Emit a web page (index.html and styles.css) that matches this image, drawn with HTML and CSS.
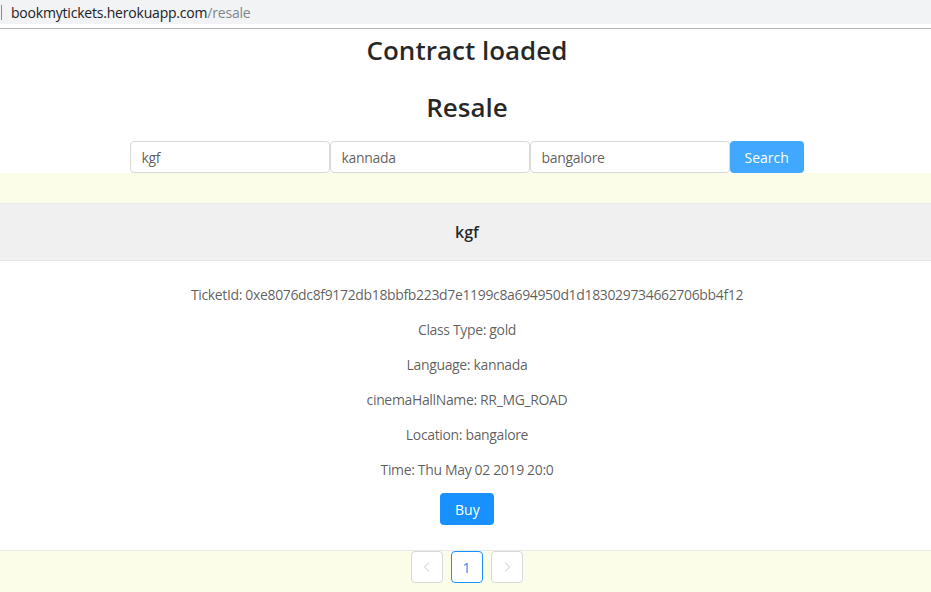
FILE: index.html
```html
<!DOCTYPE html>
<html>
<head>
<meta charset="utf-8">
<link rel="stylesheet" href="styles.css">
</head>
<body>
<div class="urlbar"><span class="caret"></span><span class="host">bookmytickets.herokuapp.com</span><span class="path">/resale</span></div>
<div class="urlgap"></div>
<main class="page">
  <h2 class="title">Contract loaded</h2>
  <h2 class="title second">Resale</h2>
  <form class="search">
    <input class="field" value="kgf">
    <input class="field" value="kannada">
    <input class="field" value="bangalore">
    <button type="button" class="btn search-btn">Search</button>
  </form>
  <div class="band"></div>
  <section class="card">
    <div class="card-head">kgf</div>
    <div class="card-body">
      <p>TicketId: 0xe8076dc8f9172db18bbfb223d7e1199c8a694950d1d183029734662706bb4f12</p>
      <p>Class Type: gold</p>
      <p>Language: kannada</p>
      <p>cinemaHallName: RR_MG_ROAD</p>
      <p>Location: bangalore</p>
      <p>Time: Thu May 02 2019 20:0</p>
      <button type="button" class="btn buy-btn">Buy</button>
    </div>
  </section>
  <nav class="pager">
    <span class="pg disabled"><svg width="12" height="12" viewBox="0 0 12 12"><path d="M8 1.5 L3.5 6 L8 10.5" fill="none" stroke="currentColor" stroke-width="1"/></svg></span>
    <span class="pg active">1</span>
    <span class="pg disabled"><svg width="12" height="12" viewBox="0 0 12 12"><path d="M4 1.5 L8.5 6 L4 10.5" fill="none" stroke="currentColor" stroke-width="1"/></svg></span>
  </nav>
</main>
</body>
</html>
```
FILE: styles.css
```css
* { box-sizing: border-box; }
html, body { margin: 0; padding: 0; background: #fff; }
body {
  font-family: "Open Sans", "Noto Sans", sans-serif;
  font-size: 14px;
  color: rgba(0,0,0,.65);
  overflow: hidden;
  height: 592px;
}
.urlbar {
  height: 24px;
  background: #f1f3f4;
  display: flex;
  align-items: center;
  padding-left: 1px;
  font-size: 14px;
  letter-spacing: -0.2px;
}
.caret { width: 1px; height: 15px; background: #8a8a8a; margin-right: 9px; }
.host { color: #202124; }
.path { color: #80868b; }
.urlgap { height: 5px; border-bottom: 1px solid #b3b3b3; }
.page { display: flex; flex-direction: column; align-items: center; }
.title {
  margin: 0;
  font-size: 26px;
  font-weight: 600;
  color: rgba(0,0,0,.85);
  line-height: 40px;
  height: 44px;
  padding-top: 1px;
  padding-left: 3px;
}
.second { margin-top: 13px; height: 55px; }
.search { display: flex; margin: 0 0 0 2px; }
.field {
  width: 200px;
  height: 32px;
  border: 1px solid #d9d9d9;
  border-radius: 4px;
  padding: 4px 11px;
  font: inherit;
  font-size: 14px;
  color: rgba(0,0,0,.65);
  outline: none;
  letter-spacing: -0.3px;
}
.btn {
  height: 32px;
  border: none;
  border-radius: 4px;
  color: #fff;
  font: inherit;
  font-size: 14px;
  padding: 0 15px;
  cursor: pointer;
}
.search-btn { background: #40a9ff; width: 74px; }
.band { width: 100%; height: 31px; background: #fcfde8; border-bottom: 1px solid #e8e8e8; }
.card { width: 100%; }
.card-head {
  height: 57px;
  background: #f0f0f0;
  border-bottom: 1px solid #e8e8e8;
  display: flex;
  align-items: center;
  justify-content: center;
  padding-left: 3px;
  font-size: 16px;
  font-weight: 600;
  color: rgba(0,0,0,.85);
}
.card-body {
  display: flex;
  flex-direction: column;
  align-items: center;
  padding-top: 23px;
  padding-left: 3px;
  height: 290px;
  border-bottom: 1px solid #e8e8e8;
  letter-spacing: -0.35px;
}
.card-body p { margin: 0 0 14px; line-height: 21px; }
.buy-btn { background: #1890ff; width: 54px; margin-top: -1px; letter-spacing: 0; }
.pager {
  width: 100%;
  height: 45px;
  background: #fcfde8;
  display: flex;
  justify-content: center;
  gap: 8px;
  padding-left: 2px;
}
.pg {
  width: 32px;
  height: 32px;
  border: 1px solid #d9d9d9;
  border-radius: 4px;
  background: #fff;
  display: flex;
  align-items: center;
  justify-content: center;
  font-size: 14px;
}
.pg.disabled { color: #c8c8c8; }
.pg.active { border-color: #1890ff; color: #1890ff; }
```
